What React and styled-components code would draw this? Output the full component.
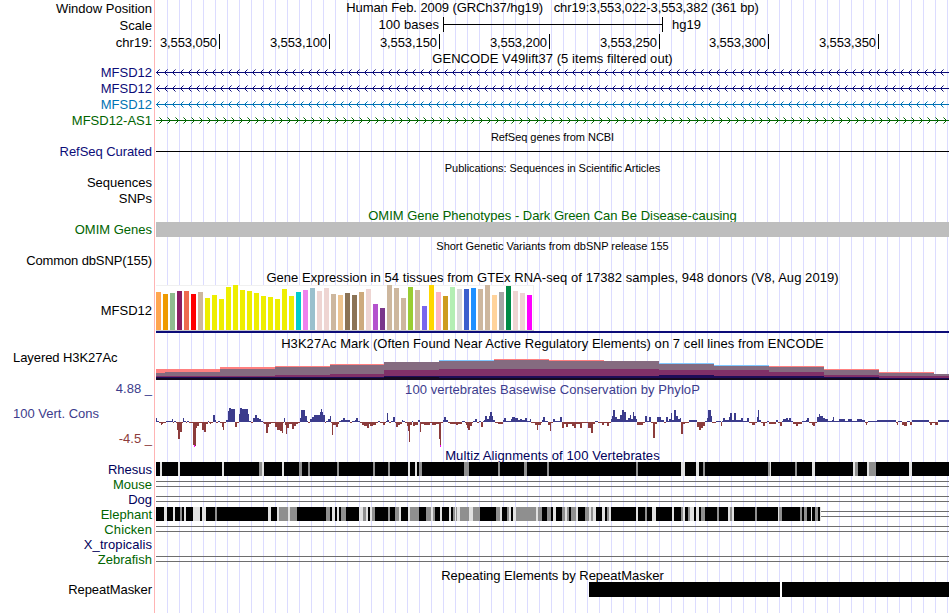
import React from "react";
import styled, { createGlobalStyle } from "styled-components";

const Global = createGlobalStyle`
  body { margin: 0; background: #fff; }
`;

const Browser = styled.main`
  width: 949px;
  height: 613px;
  overflow: hidden;
  display: flex;
  flex-direction: column;
  font: 13px/15px "Liberation Sans", Arial, sans-serif;
  color: #000;
  white-space: pre;
  background:
    linear-gradient(#ffb4b4, #ffb4b4) 154px 0 / 1px 100% no-repeat,
    repeating-linear-gradient(90deg, #dcdcff 0 1px, transparent 1px 12px) 167px 0 / 783px 100% no-repeat;
`;

const Row = styled.section`
  display: flex;
  flex: none;
  height: ${(p) => p.$h}px;
`;

const LabelColumn = styled.div`
  width: 152px;
  margin-right: 4px;
  flex: none;
  display: flex;
  flex-direction: column;
`;

const Label = styled.span`
  display: block;
  height: 15px;
  margin-top: ${(p) => p.$top || 0}px;
  padding-left: 13px;
  text-align: ${(p) => (p.$left ? "left" : "right")};
  color: ${(p) => p.$color || "#000"};
  letter-spacing: ${(p) => p.$ls || 0}px;
`;

const Track = styled.div`
  width: 793px;
  flex: none;
`;

const Title = styled.h2`
  margin: ${(p) => p.$top || 0}px 0 0;
  height: 15px;
  font-size: ${(p) => (p.$small ? 11 : 13)}px;
  font-weight: 400;
  text-align: center;
  color: ${(p) => p.$color || "#000"};
  letter-spacing: ${(p) => p.$ls || 0}px;
`;

const Chart = styled.svg`
  display: block;
  shape-rendering: crispEdges;
`;

const ScaleLine = styled.div`
  display: flex;
`;
const ScaleText = styled.span`
  width: ${(p) => p.$w}px;
  text-align: ${(p) => p.$align};
  letter-spacing: 0.05px;
`;
const ScaleBar = styled.div`
  width: 218px;
  height: 15px;
  margin: 0 9px 0 4px;
  border: solid #000;
  border-width: 0 1px;
  background: linear-gradient(#000, #000) 0 7px / 100% 1px no-repeat;
`;

const Ruler = styled.div`
  display: flex;
  padding-top: 1px;
`;
const Tick = styled.span`
  box-sizing: border-box;
  width: ${(p) => p.$w}px;
  height: 15px;
  padding: 1px 2px 0 0;
  border-right: 1px solid #000;
  text-align: right;
  letter-spacing: -0.08px;
`;

const GrayBar = styled.div`
  height: 15px;
  background: #bebebe;
`;

const NAVY = "#0c0c78";
const GREEN = "#006400";
const BLUE = "#3c3c8c";
const RED = "#8c3c3c";

function TitleRow({ h, top, label, labelTop, small, color, ls, children }) {
  return (
    <Row $h={h}>
      <LabelColumn>{label && <Label $top={labelTop}>{label}</Label>}</LabelColumn>
      <Track>
        <Title $top={top} $small={small} $color={color} $ls={ls}>{children}</Title>
      </Track>
    </Row>
  );
}

function TrackRow({ h, label, labelTop = 1, color, ls, children }) {
  return (
    <Row $h={h}>
      <LabelColumn>
        <Label $top={labelTop} $color={color} $ls={ls}>{label}</Label>
      </LabelColumn>
      <Track>{children}</Track>
    </Row>
  );
}

// Strand arrows every 8px: solid near the tip, fading at the ends of the arms.
function Gene({ color, forward }) {
  const pixels = (step) =>
    Array.from({ length: 100 }, (_, i) => {
      const x = i * 8 + (forward ? 6 - step : step);
      return `M${x} ${8 - step}h1v1h-1zM${x} ${8 + step}h1v1h-1z`;
    }).join("");
  return (
    <Chart width="793" height="16">
      <rect y="8" width="793" height="1" fill={color} />
      <path d={pixels(1) + pixels(2)} fill={color} />
      <path d={pixels(3)} fill={color} opacity="0.55" />
    </Chart>
  );
}

const yellow = (...tops) => tops.map((t) => [t, "#eeee00"]);
const TISSUES = [
  [292, "#ffa54f"], [294, "#ee9a00"], [293, "#8fbc8f"], [291, "#8b1c62"], [291, "#ee6a50"], [294, "#ff0000"], [292, "#cdb79e"],
  ...yellow(298, 295, 299, 287, 285, 290, 291, 293, 296, 297, 299, 289, 296),
  [292, "#00cdcd"], [290, "#ee82ee"], [288, "#9ac0cd"], [291, "#eed5d2"], [288, "#eed5d2"], [294, "#cdb79e"], [295, "#eec591"],
  [293, "#8b7355"], [295, "#8b7355"], [292, "#cdaa7d"], [289, "#eed5d2"], [304, "#b452cd"], [308, "#7a378b"], [285, "#cdb79e"],
  [288, "#cdb79e"], [298, "#cdb79e"], [287, "#9acd32"], [290, "#cdb79e"], [306, "#7a67ee"], [285, "#ffd700"], [292, "#ffb6c1"],
  [296, "#cd9b1d"], [287, "#b4eeb4"], [289, "#d9d9d9"], [289, "#3a5fcd"], [288, "#1e90ff"], [289, "#cdb79e"], [285, "#cdb79e"],
  [295, "#ffd39b"], [292, "#a6a6a6"], [286, "#008b45"], [291, "#eed5d2"], [293, "#eed5d2"], [295, "#ff00ff"],
];

function Expression() {
  return (
    <Chart width="793" height="49" viewBox="156 284 793 49">
      <rect x="156" y="285" width="378" height="46" fill="#f0f0f0" />
      <rect x="156" y="286" width="377" height="44" fill="#fff" />
      <rect x="156" y="330" width="378" height="1" fill="#c8c8c8" />
      {TISSUES.map(([top, color], i) => (
        <rect key={i} x={156 + i * 7} y={top} width="5" height={330 - top} fill={color} />
      ))}
      <rect x="156" y="331" width="793" height="2" fill={NAVY} />
    </Chart>
  );
}

const SALMON = "#ff8080";
const SKY = "#80c8ff";
// start, cap top, cap colour, then tops of the grey, purple, indigo and black layers
const ACETYLATION = [
  [156, 369, SALMON, 373, 376, 377, 378],
  [165, 369, SALMON, 372, 376, 377, 378],
  [220, 367, SALMON, 369, 376, 377, 378],
  [275, 366, SALMON, 367, 375, 377, 378],
  [330, 364, SALMON, 365, 374, 377, 378],
  [384, 362, SALMON, 362, 370, 376, 377],
  [439, 360, SKY, 361, 369, 376, 378],
  [494, 359, SALMON, 360, 369, 376, 378],
  [549, 360, SALMON, 361, 369, 376, 378],
  [604, 361, SALMON, 361, 369, 376, 378],
  [659, 363, SKY, 364, 370, 375, 378],
  [714, 365, SKY, 366, 370, 376, 378],
  [769, 366, SALMON, 367, 372, 376, 378],
  [824, 369, SALMON, 370, 375, 377, 378],
  [879, 372, SALMON, 373, 376, 378, 379],
  [934, 374, SALMON, 374, 376, 378, 379],
];

function Acetylation() {
  return (
    <Chart width="793" height="30" viewBox="156 350 793 30">
      {ACETYLATION.map(([x, top, cap, grey, purple, indigo, black], i) => {
        const w = (ACETYLATION[i + 1] ? ACETYLATION[i + 1][0] : 949) - x;
        return [[top, cap], [grey, "#856b80"], [purple, "#803068"], [indigo, "#1e0c58"], [black, "#140a20"]].map(([y, fill], j) => (
          <rect key={i + "-" + j} x={x} y={y} width={w} height={380 - y} fill={fill} />
        ));
      })}
    </Chart>
  );
}

const PHYLOP = `156:4 157:1 159:-1 161:-3 162:-2 163:-1 166:1 171:1 172:3 173:-1 174:1 176:-1 177:-8 178:-17 180:-10 182:-1 183:4 184:1 186:-1 187:1 189:-1 193:-23 194:-24 196:-6 197:-4 199:-1 202:-8 204:-10 206:-2 208:1 209:-1 210:-2 211:-1 213:7 215:2 216:-1 218:1 220:-1 222:-5 223:-8 224:-1 226:2 228:11 229:14 231:13 235:-5 237:-1 239:8 240:14 242:13 248:8 249:1 251:-1 253:4 255:7 257:4 259:3 261:1 263:-1 264:-2 266:-11 268:-5 269:-2 271:-1 275:-5 277:-8 280:-9 282:-11 283:-1 284:4 285:-3 286:-12 287:-6 289:-2 292:-7 294:-4 296:-2 298:-1 300:4 301:12 305:6 307:1 308:-1 310:3 312:5 314:7 320:10 321:13 322:10 323:7 325:-1 326:1 328:3 330:6 331:-1 332:-13 333:-3 336:-5 338:-2 339:1 341:2 343:4 345:2 350:-1 352:1 355:2 356:4 358:1 360:-1 362:-3 364:-4 367:-6 369:-2 370:-4 373:-3 376:-1 378:1 380:-1 383:-3 385:-1 386:1 387:9 388:2 389:-1 391:1 393:5 395:-1 396:-5 398:-3 400:-2 402:2 403:1 405:-1 407:-4 408:-9 409:-20 410:-3 412:1 413:-4 415:-3 418:2 420:-10 421:-2 424:-3 430:-1 432:-3 436:-2 439:-17 440:-24 441:-1 443:2 444:5 446:2 448:-1 450:-2 456:-3 458:-2 462:1 465:-1 466:-3 467:-6 468:-8 470:-4 472:-1 473:1 475:3 477:-1 479:1 481:-5 483:1 484:2 485:6 487:3 489:6 490:10 492:6 493:2 495:-1 498:-2 503:2 504:4 506:1 510:1 511:3 512:5 515:4 518:2 520:3 522:2 525:4 527:1 530:3 531:-1 535:-3 537:-8 538:-3 541:-1 542:2 543:5 545:1 548:-3 550:-9 551:-1 553:3 555:1 560:5 562:-6 564:-2 566:-5 568:-2 572:-4 574:-6 576:-2 580:-6 582:-1 588:-6 591:-11 593:-2 595:1 598:-1 602:-3 604:-1 607:-4 609:-1 611:3 612:6 613:12 615:5 617:3 620:7 622:12 624:10 626:2 628:4 630:7 631:3 633:10 634:6 636:3 637:-3 640:-3 643:-1 645:6 647:1 649:5 651:-1 653:-16 655:-2 657:5 661:2 664:-1 666:5 668:1 669:3 671:9 672:2 674:12 676:6 678:3 680:4 681:-12 683:-2 685:-1 689:2 694:2 697:-5 699:-8 701:-6 703:-4 705:1 707:4 708:12 711:6 712:-1 716:1 721:-4 722:1 723:4 725:2 729:5 730:9 732:2 734:9 736:2 741:4 743:1 747:4 749:-1 752:-3 755:-1 757:5 758:12 759:2 761:-1 763:-4 765:-1 767:1 769:-2 773:-2 776:2 778:-1 780:-4 782:1 783:3 786:4 788:2 789:4 791:1 793:-2 796:-4 798:-2 802:1 806:2 807:4 809:-1 812:-3 813:-4 815:-1 817:5 819:8 820:6 823:4 825:3 828:1 832:2 833:5 834:1 839:3 845:1 848:3 852:1 857:3 862:2 865:-1 866:-3 867:-1 868:1 877:2 896:-1 897:-3 898:1 902:-3 904:-4 907:1 910:-3 912:2 929:-1 930:-3 932:-1 935:-3 938:2 949:0`
  .split(" ")
  .map((s) => s.split(":").map(Number));

function Conservation() {
  return (
    <Chart width="793" height="50" viewBox="156 397 793 50">
      {PHYLOP.slice(0, -1).map(([x, v], i) => (
        <rect key={x} x={x} y={v > 0 ? 422 - v : 422} width={PHYLOP[i + 1][0] - x} height={Math.abs(v)} fill={v > 0 ? BLUE : RED} />
      ))}
      <rect x="194" y="445" width="1" height="2" fill="#f0f" />
      <rect x="440" y="445" width="1" height="2" fill="#f0f" />
    </Chart>
  );
}

const RHESUS = "L160-162 L178-180 L222-224 G259-262 L262-264 L282-284 G299-302 G308-310 G337-339 G373-375 G388-390 L408-410 L415-417 G419-422 G464-469 G498-500 G524-527 G547-549 G636-638 L681-685 L696-699 G703-705 G768-770 L770-771 G795-797 L812-815 L853-855 G855-858 L867-869 G869-876 L909-912";
const ELEPHANT = "L164-167 L173-175 G180-182 L184-186 L193-200 L202-206 G215-217 L268-271 L277-279 G279-288 L288-290 G290-297 G326-330 L332-335 L337-339 G341-346 L359-363 G363-366 L366-368 L370-372 G372-375 G388-390 G395-399 L399-401 L408-410 G410-419 G426-431 L431-433 G433-435 L440-442 L449-451 G453-455 L455-456 G456-457 L457-460 G460-469 L469-473 G473-480 G496-500 L500-502 G507-509 L509-511 L513-516 G516-536 L536-538 G538-542 G547-551 L553-556 G562-565 L565-567 G567-569 G571-576 L576-578 G585-589 L589-591 G591-593 L593-596 L602-605 G607-609 L609-611 L636-638 G645-647 L652-656 L672-674 G681-683 L683-685 G688-690 L690-694 L696-699 G701-705 G717-719 L728-730 G730-732 L732-734 G755-757 L778-779 G779-782 G800-802 G804-807 L811-812 G815-818 L820-821";

function Alignment({ stripes, end = 949 }) {
  return (
    <Chart width="793" height="15" viewBox="156 0 793 15">
      <rect x="156" width={end - 156} height="14" />
      {stripes.split(" ").map((s) => {
        const [a, b] = s.slice(1).split("-").map(Number);
        return <rect key={s} x={a} width={b - a} height="14" fill={s[0] === "L" ? "#e1e1e1" : "#8f8f8f"} />;
      })}
      {end < 949 && <path d={`M${end} 4.5H949M${end} 9.5H949`} stroke="#6e6e6e" />}
    </Chart>
  );
}

function Unaligned() {
  return (
    <Chart width="793" height="15">
      <path d="M0 4.5H793M0 9.5H793" stroke="#6e6e6e" />
    </Chart>
  );
}

export default function App() {
  return (
    <>
      <Global />
      <Browser>
        <TitleRow h={17} top={0} label="Window Position" labelTop={1} ls={-0.09}>
          {"Human Feb. 2009 (GRCh37/hg19)   chr19:3,553,022-3,553,382 (361 bp)"}
        </TitleRow>
        <TrackRow h={16} label="Scale">
          <ScaleLine>
            <ScaleText $w={283} $align="right">100 bases</ScaleText>
            <ScaleBar />
            <ScaleText $w={60} $align="left">hg19</ScaleText>
          </ScaleLine>
        </TrackRow>
        <TrackRow h={17} label="chr19:" labelTop={2}>
          <Ruler>
            {[["050", 64], ["100", 110], ["150", 110], ["200", 110], ["250", 110], ["300", 109], ["350", 110]].map(([n, w]) => (
              <Tick key={n} $w={w}>3,553,{n}</Tick>
            ))}
          </Ruler>
        </TrackRow>
        <TitleRow h={14} top={1} ls={0.05}>GENCODE V49lift37 (5 items filtered out)</TitleRow>
        <TrackRow h={16} label="MFSD12" color={NAVY}><Gene color={NAVY} /></TrackRow>
        <TrackRow h={16} label="MFSD12" color={NAVY}><Gene color={NAVY} /></TrackRow>
        <TrackRow h={16} label="MFSD12" color="#0073b4"><Gene color="#0073b4" /></TrackRow>
        <TrackRow h={16} label="MFSD12-AS1" color={GREEN}><Gene color={GREEN} forward /></TrackRow>
        <TitleRow h={16} top={2} small ls={-0.04}>RefSeq genes from NCBI</TitleRow>
        <TrackRow h={16} label="RefSeq Curated" labelTop={0} color={NAVY} ls={-0.06}>
          <Chart width="793" height="16"><rect y="7" width="793" height="1" fill="#000" /></Chart>
        </TrackRow>
        <TitleRow h={15} top={1} small ls={-0.05}>Publications: Sequences in Scientific Articles</TitleRow>
        <TrackRow h={16} label="Sequences" labelTop={0} />
        <TrackRow h={16} label="SNPs" labelTop={0} />
        <TitleRow h={15} top={1} color={GREEN}>OMIM Gene Phenotypes - Dark Green Can Be Disease-causing</TitleRow>
        <TrackRow h={16} label="OMIM Genes" labelTop={0} color={GREEN}><GrayBar /></TrackRow>
        <TitleRow h={15} top={1} small ls={-0.02}>Short Genetic Variants from dbSNP release 155</TitleRow>
        <TrackRow h={16} label="Common dbSNP(155)" labelTop={0} ls={-0.12} />
        <TitleRow h={15} top={1} ls={0.055}>Gene Expression in 54 tissues from GTEx RNA-seq of 17382 samples, 948 donors (V8, Aug 2019)</TitleRow>
        <TrackRow h={51} label="MFSD12" labelTop={19}><Expression /></TrackRow>
        <TitleRow h={15} top={1} ls={0.06}>H3K27Ac Mark (Often Found Near Active Regulatory Elements) on 7 cell lines from ENCODE</TitleRow>
        <Row $h={30}>
          <LabelColumn><Label $left $ls={-0.07}>Layered H3K27Ac</Label></LabelColumn>
          <Track><Acetylation /></Track>
        </Row>
        <Row $h={67}>
          <LabelColumn>
            <Label $top={1} $color={BLUE}>4.88 _</Label>
            <Label $top={10} $color={BLUE} $left>100 Vert. Cons</Label>
            <Label $top={10} $color={RED}>-4.5 _</Label>
          </LabelColumn>
          <Track>
            <Title $top={2} $color={BLUE} $ls={0.06}>100 vertebrates Basewise Conservation by PhyloP</Title>
            <Conservation />
          </Track>
        </Row>
        <TitleRow h={15} top={1} color="#00005a" ls={0.1}>Multiz Alignments of 100 Vertebrates</TitleRow>
        <TrackRow h={15} label="Rhesus" labelTop={0} color="#00005a"><Alignment stripes={RHESUS} /></TrackRow>
        <TrackRow h={15} label="Mouse" labelTop={0} color={GREEN}><Unaligned /></TrackRow>
        <TrackRow h={15} label="Dog" labelTop={0} color="#00005a"><Unaligned /></TrackRow>
        <TrackRow h={15} label="Elephant" labelTop={0} color={GREEN}><Alignment stripes={ELEPHANT} end={821} /></TrackRow>
        <TrackRow h={15} label="Chicken" labelTop={0} color={GREEN} ls={0.1}><Unaligned /></TrackRow>
        <TrackRow h={15} label="X_tropicalis" labelTop={0} color="#00005a" ls={0.08} />
        <TrackRow h={15} label="Zebrafish" labelTop={0} color={GREEN}><Unaligned /></TrackRow>
        <TitleRow h={15} top={1}>Repeating Elements by RepeatMasker</TitleRow>
        <TrackRow h={31} label="RepeatMasker" labelTop={0} ls={-0.06}>
          <Chart width="793" height="15" viewBox="156 0 793 15">
            <rect x="589" width="191" height="15" />
            <rect x="782" width="167" height="15" />
          </Chart>
        </TrackRow>
      </Browser>
    </>
  );
}
